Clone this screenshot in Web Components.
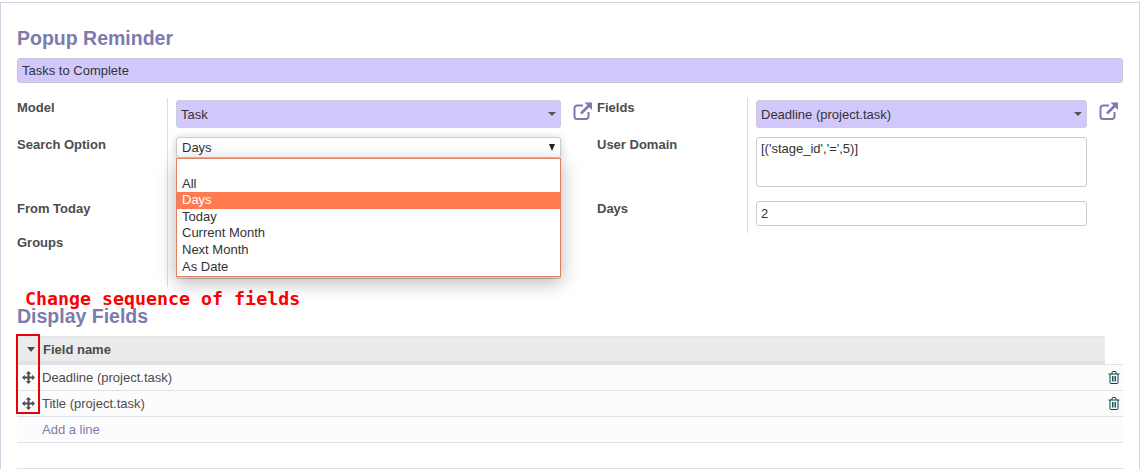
<!DOCTYPE html>
<html>
<head>
<meta charset="utf-8">
<style>
  html, body { margin: 0; height: 469px; overflow: hidden; background: #fff; }
  body { font: 13px "Liberation Sans", Arial, sans-serif; color: #4c4c4c; }
</style>
</head>
<body>
<x-sheet>
  <x-heading>Popup Reminder</x-heading>
  <x-name-bar>Tasks to Complete</x-name-bar>
  <x-columns>
    <x-group style="--rows: 37px 64px 34px 54px">
      <x-label>Model</x-label>
      <x-cell><x-select req>Task</x-select><x-ext-link></x-ext-link></x-cell>
      <x-label>Search Option</x-label>
      <x-cell>
        <x-open-select value="Days">
          <x-option></x-option>
          <x-option>All</x-option>
          <x-option selected>Days</x-option>
          <x-option>Today</x-option>
          <x-option>Current Month</x-option>
          <x-option>Next Month</x-option>
          <x-option>As Date</x-option>
        </x-open-select>
      </x-cell>
      <x-label>From Today</x-label>
      <x-cell></x-cell>
      <x-label>Groups</x-label>
      <x-cell><x-input style="--h: 44px"></x-input></x-cell>
    </x-group>
    <x-group style="--rows: 37px 64px 34px">
      <x-label>Fields</x-label>
      <x-cell><x-select req>Deadline (project.task)</x-select><x-ext-link></x-ext-link></x-cell>
      <x-label>User Domain</x-label>
      <x-cell><x-input style="--h: 50px">[('stage_id','=',5)]</x-input></x-cell>
      <x-label>Days</x-label>
      <x-cell><x-input style="--h: 25px; --pad: 4px; --align: center">2</x-input></x-cell>
    </x-group>
  </x-columns>
  <x-note>Change sequence of fields</x-note>
  <x-heading tight>Display Fields</x-heading>
  <x-lines>
    <x-line-row>Deadline (project.task)</x-line-row>
    <x-line-row>Title (project.task)</x-line-row>
  </x-lines>
</x-sheet>

<script>
// small helper, every element is just a style + markup in an open shadow root
function el(name, css, html) {
  customElements.define(name, class extends HTMLElement {
    constructor() {
      super()
      this.attachShadow({ mode: 'open' })
      this.shadowRoot.innerHTML = `<style>${css}</style>${html}`
    }
  })
}

const extIcon = `<svg width="20" height="20" viewBox="0 0 20 20" fill="none" stroke="#7c7bad">
  <path d="M15.5 11v4.5a2.5 2.5 0 0 1-2.5 2.5H4a2.5 2.5 0 0 1-2.5-2.5V7A2.5 2.5 0 0 1 4 4.5h6" stroke-width="2"/>
  <path d="M8 12.5 16 4.5" stroke-width="2.6"/>
  <path d="M11.5 1.5h7.5v7.5z" fill="#7c7bad" stroke="none"/>
</svg>`

const moveIcon = `<svg width="13" height="13" viewBox="0 0 13 13" fill="#4c4c4c">
  <path d="M6.5 0 9.2 2.8H7.5V5.5H10.2V3.8L13 6.5 10.2 9.2V7.5H7.5V10.2H9.2L6.5 13 3.8 10.2H5.5V7.5H2.8V9.2L0 6.5 2.8 3.8V5.5H5.5V2.8H3.8z"/>
</svg>`

const trashIcon = `<svg width="12" height="13" viewBox="0 0 12 13" fill="none" stroke="#0a3f44" stroke-width="1">
  <path d="M.5 3h11M4 3V1.5a1 1 0 0 1 1-1h2a1 1 0 0 1 1 1V3"/>
  <path d="M2 3v8.5a1 1 0 0 0 1 1h6a1 1 0 0 0 1-1V3"/>
  <path d="M4.5 5v5.5M6 5v5.5M7.5 5v5.5" stroke="#0a5f66"/>
</svg>`

el('x-sheet', `
  :host { display: block; height: 467px; margin-top: 2px; box-sizing: border-box; width: 1140px;
    border-top: 1px solid #d3d0e0; border-left: 1px solid #d3d0e0; border-right: 1px solid #d3d0e0;
    padding: 20px 16px 0 16px; }
`, `<slot></slot>`)

el('x-heading', `
  :host { display: block; font-size: 19.5px; line-height: 30px; font-weight: bold; color: #7c7bad; margin-bottom: 5px; }
  :host([tight]) { line-height: 23px; margin-bottom: 8px; }
`, `<slot></slot>`)

el('x-name-bar', `
  :host { display: block; box-sizing: border-box; height: 25px; line-height: 23px; padding-left: 4px;
    background: #d2c8fc; border: 1px solid #c9c5d6; border-radius: 3px; color: #333; margin-bottom: 15px; }
`, `<slot></slot>`)

el('x-columns', `
  :host { display: grid; grid-template-columns: 580px 526px; height: 189px; }
`, `<slot></slot>`)

el('x-group', `
  :host { display: grid; grid-template-columns: 150px 1fr; grid-template-rows: var(--rows); align-content: start; }
`, `<slot></slot>`)

el('x-label', `
  :host { display: block; font-weight: bold; padding-top: 2px; line-height: 15px; color: #4c4c4c; }
`, `<slot></slot>`)

el('x-cell', `
  :host { display: flex; align-items: flex-start; border-left: 1px solid #ddd; padding: 2px 36px 0 8px; position: relative; }
`, `<slot></slot>`)

el('x-select', `
  :host { display: flex; flex: 1; box-sizing: border-box; height: 28px; align-items: center; padding-left: 4px;
    background: #d2c8fc; border: 1px solid #cfcbdc; border-radius: 3px; color: #333; position: relative; }
  i { position: absolute; right: 4px; top: 11px; border: 4px solid transparent; border-top-color: #555; border-bottom: 0; }
`, `<slot></slot><i></i>`)

el('x-ext-link', `
  :host { display: block; position: absolute; right: 4px; top: 2px; width: 20px; height: 20px; margin-top: 1px; }
`, extIcon)

el('x-input', `
  :host { display: flex; flex: 1; box-sizing: border-box; height: var(--h, 28px); padding: var(--pad, 3px) 4px;
    align-items: var(--align, flex-start); background: #fff; border: 1px solid #ccc; border-radius: 3px; color: #333; line-height: 16px; }
`, `<slot></slot>`)

el('x-open-select', `
  :host { display: block; flex: 1; position: relative; z-index: 2; }
  .box { box-sizing: border-box; height: 21px; line-height: 19px; padding-left: 5px; background: #fff;
    border: 1px solid #ccc; border-radius: 3px; color: #333; position: relative;
    box-shadow: 0 1px 8px rgba(0,0,0,.2); }
  .box i { position: absolute; right: 5px; top: 6px; border: 3.5px solid transparent; border-top: 7px solid #222; border-bottom: 0; }
  .list { position: absolute; left: 0; right: 0; top: 21px; padding-bottom: 1px; background: #fff; border: 1px solid #e0805f;
    box-shadow: 0 5px 18px rgba(0,0,0,.3); color: #333; }
`, `<div class="box"></div><div class="list"><slot></slot></div>`)

customElements.whenDefined('x-open-select').then(() => {
  document.querySelectorAll('x-open-select').forEach(s => {
    const box = s.shadowRoot.querySelector('.box')
    box.innerHTML = s.getAttribute('value') + '<i></i>'
  })
})

el('x-option', `
  :host { display: block; height: 16.6px; line-height: 16.6px; padding-left: 5px; }
  :host([selected]) { background: #ff7b4f; color: #fff; }
`, `<slot></slot>`)

el('x-note', `
  :host { display: block; font: bold 18.3px "DejaVu Sans Mono", monospace; line-height: 20px; color: #f00; padding-left: 8px; margin-top: 2px; height: 16px; }
`, `<slot></slot>`)

el('x-lines', `
  :host { display: block; position: relative; }
  .head { display: flex; align-items: center; width: 1088px; box-sizing: border-box; height: 28px; background: #ebebeb;
    border-top: 1px solid #e3e5e8; border-bottom: 3px solid #dee2e6; font-weight: bold; color: #4c4c4c; }
  .handle { width: 26px; display: flex; justify-content: center; padding-left: 2px; box-sizing: border-box; }
  .handle i { border: 4.5px solid transparent; border-top: 5px solid #4c4c4c; border-bottom: 0; }
  .add { display: flex; align-items: center; height: 26px; box-sizing: border-box; border-bottom: 1px solid #dee2e6;
    background: #fcfcfc; padding-left: 25px; color: #7c7bad; }
  .top { height: 1px; background: #dee2e6; }
  .spare { height: 26px; border-bottom: 1px solid #dee2e6; box-sizing: border-box; }
  .mark { position: absolute; left: -1px; top: -2px; width: 24px; height: 80px; box-sizing: border-box; border: 2px solid #e8000b; }
`, `<div class="head"><div class="handle"><i></i></div>Field name</div>
  <div class="top"></div>
  <slot></slot>
  <div class="add">Add a line</div>
  <div class="spare"></div>
  <div class="mark"></div>`)

el('x-line-row', `
  :host { display: flex; align-items: center; height: 26px; box-sizing: border-box; border-bottom: 1px solid #dee2e6; background: #fcfcfc; position: relative; }
  .drag { width: 25px; padding-right: 3px; display: flex; justify-content: center; box-sizing: border-box; }
  .text { flex: 1; }
  .del { width: 15px; display: flex; }
`, `<div class="drag">${moveIcon}</div><div class="text"><slot></slot></div><div class="del">${trashIcon}</div>`)
</script>
</body>
</html>
